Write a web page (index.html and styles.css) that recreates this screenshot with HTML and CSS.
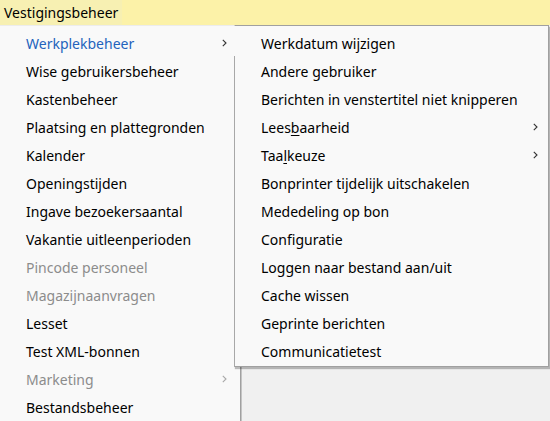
FILE: index.html
```html
<!DOCTYPE html>
<html lang="nl">
<head>
  <meta charset="UTF-8" />
  <title>Vestigingsbeheer</title>
  <link rel="stylesheet" href="styles.css">
</head>
<body>
  <div class="titlebar">
    <span class="title-item">Vestigingsbeheer</span>
  </div>

  <div class="workspace">
    <!-- main dropdown -->
    <ul class="menu menu-main">
      <li class="item active">Werkplekbeheer<svg class="chev" viewBox="0 0 5 8"><path d="M0.8 0.8 L4 4 L0.8 7.2" /></svg></li>
      <li class="item">Wise gebruikersbeheer</li>
      <li class="item">Kastenbeheer</li>
      <li class="item">Plaatsing en plattegronden</li>
      <li class="item">Kalender</li>
      <li class="item">Openingstijden</li>
      <li class="item">Ingave bezoekersaantal</li>
      <li class="item">Vakantie uitleenperioden</li>
      <li class="item disabled">Pincode personeel</li>
      <li class="item disabled">Magazijnaanvragen</li>
      <li class="item">Lesset</li>
      <li class="item">Test XML-bonnen</li>
      <li class="item disabled">Marketing<svg class="chev" viewBox="0 0 5 8"><path d="M0.8 0.8 L4 4 L0.8 7.2" /></svg></li>
      <li class="item">Bestandsbeheer</li>
    </ul>

    <!-- submenu of Werkplekbeheer -->
    <ul class="menu menu-sub">
      <li class="item">Werkdatum wijzigen</li>
      <li class="item">Andere gebruiker</li>
      <li class="item">Berichten in venstertitel niet knipperen</li>
      <li class="item">Lees<u>b</u>aarheid<svg class="chev" viewBox="0 0 5 8"><path d="M0.8 0.8 L4 4 L0.8 7.2" /></svg></li>
      <li class="item">Taa<u>l</u>keuze<svg class="chev" viewBox="0 0 5 8"><path d="M0.8 0.8 L4 4 L0.8 7.2" /></svg></li>
      <li class="item">Bonprinter tijdelijk uitschakelen</li>
      <li class="item">Mededeling op bon</li>
      <li class="item">Configuratie</li>
      <li class="item">Loggen naar bestand aan/uit</li>
      <li class="item">Cache wissen</li>
      <li class="item">Geprinte berichten</li>
      <li class="item">Communicatietest</li>
    </ul>
  </div>
</body>
</html>
```

FILE: styles.css
```css
* {
  box-sizing: border-box; margin: 0; padding: 0;
}
body {
  font-family: 'Noto Sans', 'Open Sans', sans-serif;
  font-size: 14px;
  color: #000;
  background: #f0f0f0;
  height: 421px;
  overflow: hidden;
}
.titlebar {
  height: 25px;
  background: #fcf2a8;
  display: flex;
  align-items: stretch;
}
.title-item {
  display: flex;
  align-items: center;
  padding: 0 6px 0 4px;
  width: 122px;
  background: #f7f0b2;
}
.workspace {
  position: relative;
  height: 396px;
}
.menu {
  list-style: none;
  background: #f9f9f9;
  padding-top: 3px;
}
.menu-main {
  position: absolute;
  left: 0;
  top: 0;
  bottom: 0;
  width: 241px;
  border-top: 1px solid #ececec;
  border-right: 1px solid #a0a0a0;
  box-shadow: 1px 0 0 #c4c4c4;
}
.menu-sub {
  position: absolute;
  left: 234px;
  top: 0;
  width: 315px;
  padding-bottom: 1px;
  border: 1px solid #a0a0a0;
  border-left-color: #f9f9f9;
  box-shadow: 1px 2px 1px rgba(0,0,0,0.25);
}
/* left edge of the submenu stops short of the open parent item */
.menu-sub::before {
  content: '';
  position: absolute;
  left: -1px;
  top: 30px;
  bottom: -1px;
  width: 1px;
  background: #a8a8a8;
}
.item {
  display: flex;
  align-items: center;
  height: 28px;
  padding-left: 26px;
  white-space: nowrap;
}
.item.active {
  color: #2463bd;
}
.item.disabled {
  color: #8c8c8c;
}
.item u {
  text-underline-offset: 2px;
}
.chev {
  width: 5px;
  height: 8px;
  margin-left: auto;
  fill: none;
  stroke: #333;
  stroke-width: 1.1;
}
.menu-main .chev {
  margin-right: 13px;
}
.menu-sub .chev {
  margin-right: 10px;
}
.item.disabled .chev {
  stroke: #a8a8a8;
}
```
